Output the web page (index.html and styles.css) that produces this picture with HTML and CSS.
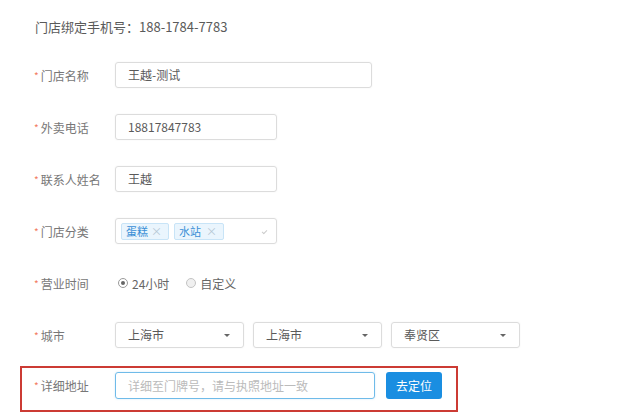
FILE: index.html
```html
<!DOCTYPE html>
<html lang="zh">
<head>
    <meta charset="UTF-8">
    <meta name="viewport" content="width=device-width, initial-scale=1.0">
    <title>门店信息</title>
    <link rel="stylesheet" href="styles.css">
</head>
<body>
    <div class="page">
        <div class="bind-phone">门店绑定手机号：188-1784-7783</div>

        <div class="row">
            <div class="label"><span class="req">*</span>门店名称</div>
            <div class="input wide">王越-测试</div>
        </div>
        <div class="row">
            <div class="label"><span class="req">*</span>外卖电话</div>
            <div class="input">18817847783</div>
        </div>
        <div class="row">
            <div class="label"><span class="req">*</span>联系人姓名</div>
            <div class="input">王越</div>
        </div>
        <div class="row">
            <div class="label"><span class="req">*</span>门店分类</div>
            <div class="input tags">
                <span class="tag">蛋糕<i>×</i></span>
                <span class="tag">水站<i>×</i></span>
                <span class="tag-arrow"></span>
            </div>
        </div>
        <div class="row">
            <div class="label"><span class="req">*</span>营业时间</div>
            <div class="radios">
                <span class="radio checked"></span><span class="radio-text">24小时</span>
                <span class="radio"></span><span class="radio-text">自定义</span>
            </div>
        </div>
        <div class="row">
            <div class="label"><span class="req">*</span>城市</div>
            <div class="selects">
                <div class="input select">上海市<span class="caret"></span></div>
                <div class="input select">上海市<span class="caret"></span></div>
                <div class="input select">奉贤区<span class="caret"></span></div>
            </div>
        </div>

        <div class="highlight">
            <div class="label"><span class="req">*</span>详细地址</div>
            <div class="input address">详细至门牌号，请与执照地址一致</div>
            <button class="locate">去定位</button>
        </div>
    </div>
</body>
</html>
```

FILE: styles.css
```css
* {
    margin: 0;
    padding: 0;
    box-sizing: border-box;
    font-family: "Noto Sans CJK SC", "Liberation Sans", sans-serif;
}
body {
    background: #fff;
    color: #666;
    font-size: 12px;
    overflow: hidden;
}
.page {
    padding: 17px 0 0 0;
}
.bind-phone {
    padding-left: 35px;
    font-size: 13px;
    line-height: 20px;
    color: #5a5a5a;
    margin-bottom: 25px;
}
.row {
    display: flex;
    align-items: center;
    height: 26px;
    margin-bottom: 26px;
    padding-left: 34px;
}
.label {
    width: 81px;
    flex-shrink: 0;
    color: #777;
    font-size: 12px;
}
.req {
    color: #f27b5e;
    font-size: 10px;
    margin-right: 2px;
    position: relative;
    top: -1px;
}
.input {
    width: 162px;
    height: 26px;
    border: 1px solid #dcdcdc;
    border-radius: 3px;
    padding-left: 12px;
    line-height: 24px;
    color: #5a5a5a;
    font-size: 12px;
    box-shadow: 0 0 2px rgba(0, 0, 0, 0.06);
}
.input.wide {
    width: 257px;
}
.tags {
    display: flex;
    align-items: center;
    padding-left: 5px;
    position: relative;
}
.tag {
    display: inline-flex;
    align-items: center;
    justify-content: space-between;
    height: 17px;
    width: 48px;
    padding: 0 6px 0 4px;
    margin-right: 5px;
    background: #eaf5fd;
    border: 1px solid #c8e4f7;
    border-radius: 2px;
    color: #3a8fd6;
    font-size: 11px;
    line-height: 15px;
}
.tag + .tag {
    width: 50px;
}
.tag i {
    font-style: normal;
    color: #b5c7d4;
    font-size: 11px;
}
.tag-arrow {
    position: absolute;
    right: 9px;
    top: 11px;
    width: 5px;
    height: 3px;
    border-left: 1px solid #ccc;
    border-bottom: 1px solid #ccc;
    transform: rotate(-45deg);
}
.radios {
    display: flex;
    align-items: center;
    padding-left: 3px;
}
.radio {
    width: 10px;
    height: 10px;
    border: 1px solid #c4c4c4;
    border-radius: 50%;
    background: #f0f0f0;
    position: relative;
    margin-right: 4px;
}
.radio.checked {
    background: #fff;
    border-color: #9a9a9a;
}
.radio.checked::after {
    content: "";
    position: absolute;
    left: 2px;
    top: 2px;
    width: 4px;
    height: 4px;
    border-radius: 50%;
    background: #666;
}
.radio-text {
    color: #666;
    margin-right: 17px;
}
.selects {
    display: flex;
    gap: 9px;
}
.select {
    width: 129px;
    position: relative;
}
.caret {
    position: absolute;
    right: 13px;
    top: 11px;
    border-left: 3px solid transparent;
    border-right: 3px solid transparent;
    border-top: 3px solid #666;
}
.highlight {
    display: flex;
    align-items: flex-start;
    width: 438px;
    height: 46px;
    margin-left: 20px;
    margin-top: -8px;
    border: 2px solid #cc3b34;
    padding: 4px 0 0 12px;
}
.highlight .label {
    line-height: 27px;
}
.address {
    width: 260px;
    height: 27px;
    border-color: #6fbbe9;
    color: #bbb;
    line-height: 25px;
    box-shadow: 0 0 2px rgba(64, 160, 230, 0.25);
}
.locate {
    margin-left: 11px;
    width: 56px;
    height: 27px;
    border: none;
    border-radius: 3px;
    background: #1a8ee1;
    color: #fff;
    font-size: 12px;
    cursor: pointer;
}
```
